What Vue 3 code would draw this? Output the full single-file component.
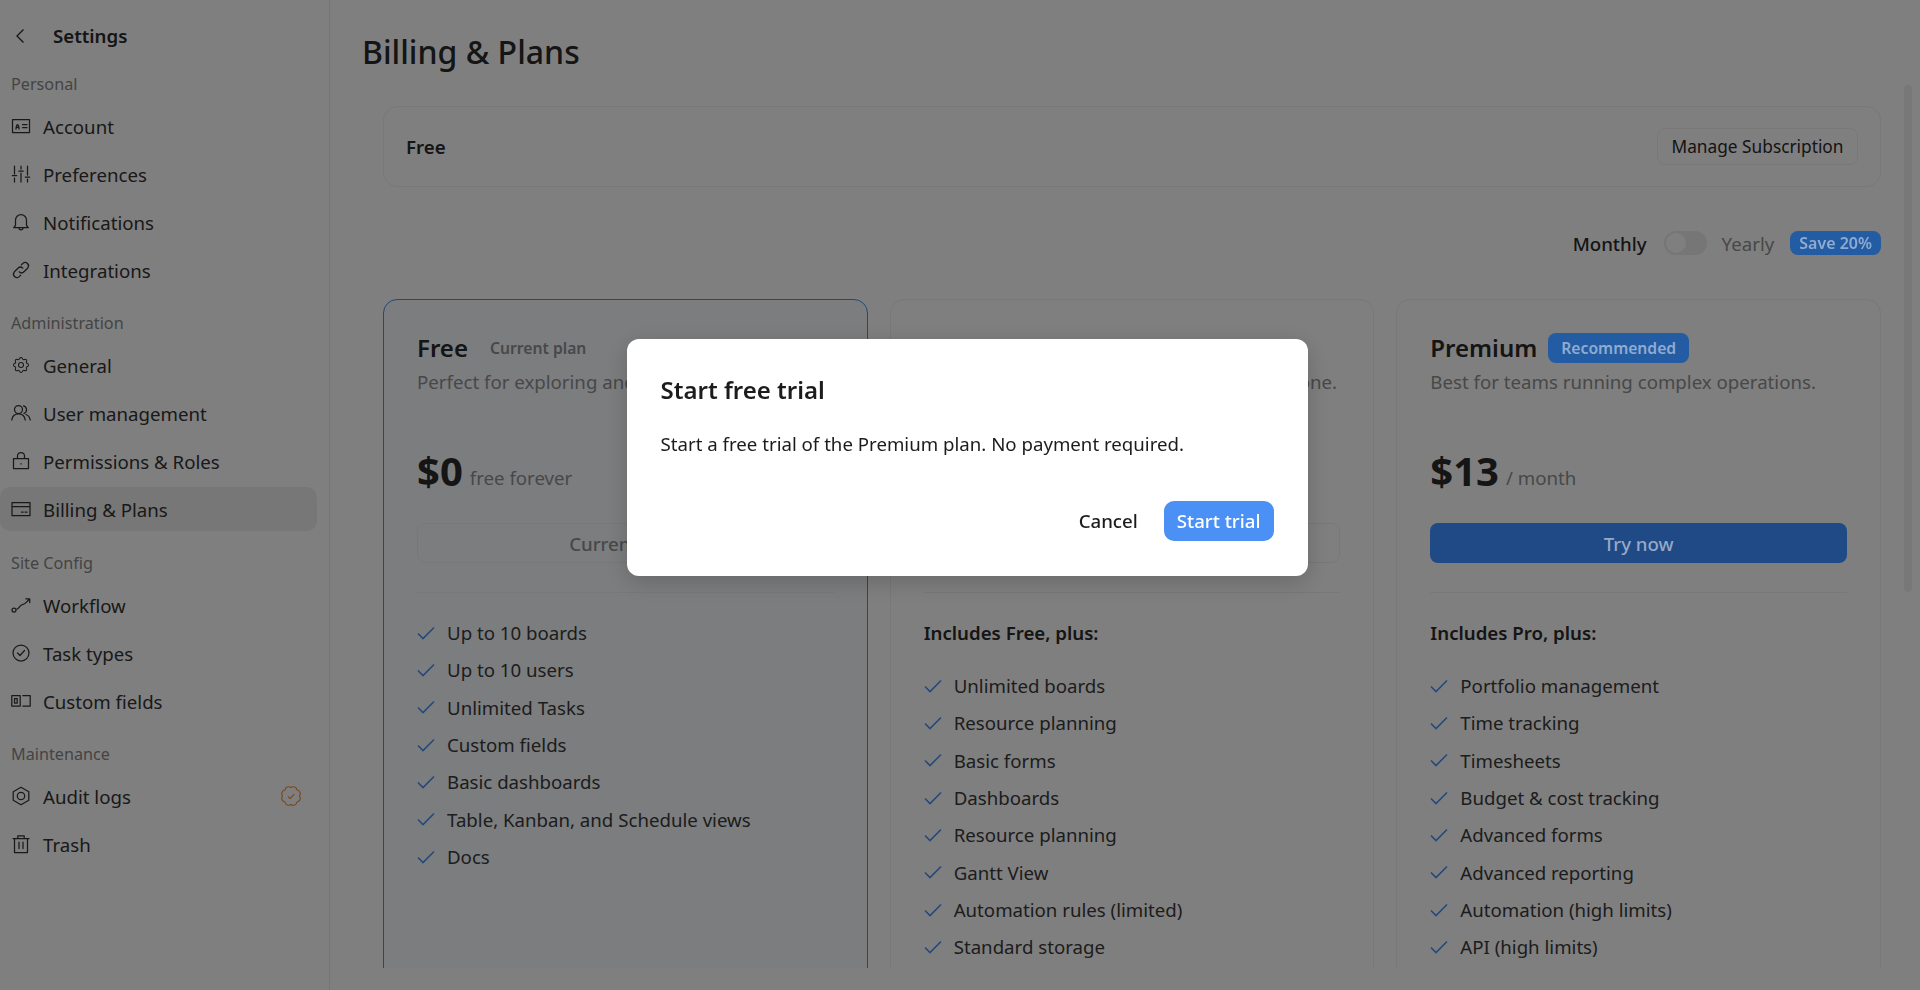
<template>
  <div class="page">
    <aside class="side">
      <div class="side__head">
        <svg class="side__back" viewBox="0 0 20 20" width="20" height="20"><path d="M12.500 3.500 6 10l6.500 6.500" /></svg>
        <span class="side__title">Settings</span>
      </div>
      <section v-for="group in nav" :key="group.label" class="side__group">
        <div class="side__label">{{ group.label }}</div>
        <a
          v-for="item in group.items"
          :key="item.name"
          class="side__item"
          :class="{ 'side__item--active': item.name === 'Billing & Plans' }"
        >
          <svg class="icon" :viewBox="item.box || '0 0 20 20'" width="20" height="20">
            <path :d="item.d" />
          </svg>
          <span>{{ item.name }}</span>
          <svg v-if="item.badge" class="side__badge" viewBox="0 0 20 20" width="20" height="20">
            <path d="M10 1.500A3.800 3.800 0 0 1 16 4A3.800 3.800 0 0 1 18.500 10A3.800 3.800 0 0 1 16 16A3.800 3.800 0 0 1 10 18.500A3.800 3.800 0 0 1 4 16A3.800 3.800 0 0 1 1.500 10A3.800 3.800 0 0 1 4 4A3.800 3.800 0 0 1 10 1.500z" />
            <path d="M6.800 10.400l2.300 2.300 4.200-4.600" />
          </svg>
        </a>
      </section>
    </aside>

    <main class="main">
      <h1 class="main__title">Billing &amp; Plans</h1>
      <div class="scroller">
        <div class="current">
          <strong>Free</strong>
          <button class="btn-outline" type="button">Manage Subscription</button>
        </div>

        <div class="period">
          <span class="period__on">Monthly</span>
          <span class="switch"><i></i></span>
          <span class="period__off">Yearly</span>
          <span class="pill pill--save">Save 20%</span>
        </div>

        <div class="plans">
          <article
            v-for="plan in plans"
            :key="plan.name"
            class="plan"
            :class="{ 'plan--current': plan.current }"
          >
            <div class="plan__head">
              <h2>{{ plan.name }}</h2>
              <span v-if="plan.tag" class="pill" :class="{ 'pill--muted': plan.current }">{{ plan.tag }}</span>
            </div>
            <p class="plan__desc">{{ plan.desc }}</p>
            <div class="plan__price">
              <b>{{ plan.price }}</b>
              <span>{{ plan.unit }}</span>
            </div>
            <button class="plan__cta" :class="{ 'plan__cta--primary': plan.primary }" type="button">
              {{ plan.cta }}
            </button>
            <hr />
            <div v-if="plan.intro" class="plan__intro">{{ plan.intro }}</div>
            <ul>
              <li v-for="feature in plan.features" :key="feature">
                <svg viewBox="0 0 18 14" width="18" height="14"><path d="M1 7.500 6 12.500 17 1.500" /></svg>
                {{ feature }}
              </li>
            </ul>
          </article>
        </div>
      </div>
      <div class="thumb"></div>
    </main>

    <div class="scrim">
      <div class="dialog">
        <h3>Start free trial</h3>
        <p>Start a free trial of the Premium plan. No payment required.</p>
        <div class="dialog__foot">
          <button class="dialog__cancel" type="button">Cancel</button>
          <button class="dialog__ok" type="button">Start trial</button>
        </div>
      </div>
    </div>
  </div>
</template>

<script setup>
const gear =
  'M10.325 4.317c.426-1.756 2.924-1.756 3.35 0a1.724 1.724 0 0 0 2.573 1.066c1.543-.94 3.31.826 2.37 2.37a1.724 1.724 0 0 0 1.065 2.572c1.756.426 1.756 2.924 0 3.35a1.724 1.724 0 0 0-1.066 2.573c.94 1.543-.826 3.31-2.37 2.37a1.724 1.724 0 0 0-2.572 1.065c-.426 1.756-2.924 1.756-3.35 0a1.724 1.724 0 0 0-2.573-1.066c-1.543.94-3.31-.826-2.37-2.37a1.724 1.724 0 0 0-1.065-2.572c-1.756-.426-1.756-2.924 0-3.35a1.724 1.724 0 0 0 1.066-2.573c-.94-1.543.826-3.31 2.37-2.37 1 .608 2.296.07 2.572-1.065zM9 12a3 3 0 1 0 6 0 3 3 0 0 0-6 0'

const nav = [
  {
    label: 'Personal',
    items: [
      { name: 'Account', d: 'M1.500 3.500h17v13h-17zM5 13c0-1.200 0-2.400.9-3.900.4-.7.8-.7 1.200 0C8 10.600 8 11.800 8 13M5.300 11.400h2.400M11.500 8.500h4.500M11.500 11.500h4.500' },
      { name: 'Preferences', d: 'M3.500 2v8M3.500 14v4M1.300 11.500h4.400M10 2v3M10 9v9M7.800 7h4.400M16.500 2v9M16.500 15v3M14.300 13h4.400' },
      { name: 'Notifications', d: 'M4.500 13.500V8.200a5.500 5.500 0 0 1 11 0v5.300l1.800 2.200H2.700zM8 16c0 2.400 4 2.400 4 0' },
      { name: 'Integrations', d: 'M8.200 11.800a3.400 3.400 0 0 0 4.800 0l3.600-3.600a3.400 3.400 0 0 0-4.800-4.800l-1.400 1.400M11.800 8.200a3.400 3.400 0 0 0-4.800 0l-3.600 3.600a3.400 3.400 0 0 0 4.800 4.800l1.400-1.400' },
    ],
  },
  {
    label: 'Administration',
    items: [
      { name: 'General', box: '0 0 24 24', d: gear },
      { name: 'User management', d: 'M7.500 10.500a4 4 0 1 0 0-8 4 4 0 0 0 0 8zM.8 17c.4-3.600 3-6.200 6.700-6.200s6.300 2.600 6.700 6.200M12.500 2.800a4 4 0 0 1 .5 7.600M15 11.500c2.200.8 3.800 2.800 4.200 5.500' },
      { name: 'Permissions & Roles', d: 'M2.500 7.500h15v10h-15zM6.500 7.500V5a3.500 3.500 0 0 1 7 0v2.500M10 12.500v.6' },
      { name: 'Billing & Plans', d: 'M1 3.500h18v13H1zM1 7.500h18M10.500 13h1.700M14 13h2' },
    ],
  },
  {
    label: 'Site Config',
    items: [
      { name: 'Workflow', d: 'M1 15a2 2 0 1 0 4 0 2 2 0 0 0-4 0zM5 14.500c3.500-.2 3.500-5 6.500-5 2.800 0 3.300-1.800 7-5.500M14.800 3.800h3.900v3.900' },
      { name: 'Task types', d: 'M2 10a8 8 0 1 0 16 0 8 8 0 0 0-16 0zM6.500 10l2.500 2.500 4.500-5' },
      { name: 'Custom fields', d: 'M.8 4.500h8.400v10.500H.8zM3.500 7.500h2.700v4.500H3.500zM11.800 4.500h7.400v10.500h-7.400' },
    ],
  },
  {
    label: 'Maintenance',
    items: [
      { name: 'Audit logs', badge: true, d: 'M10 1.300l7.800 4.400v8.600L10 18.700l-7.800-4.400V5.700zM6.300 10a3.700 3.700 0 1 0 7.400 0 3.700 3.700 0 0 0-7.400 0z' },
      { name: 'Trash', d: 'M3.500 4.500h13v14h-13zM6.800 4.500V1.800h6.400v2.700M2 4.500h16M8 8v6.500M12 8v6.500' },
    ],
  },
]

const plans = [
  {
    name: 'Free',
    tag: 'Current plan',
    current: true,
    desc: 'Perfect for exploring and getting started.',
    price: '$0',
    unit: 'free forever',
    cta: 'Current plan',
    features: [
      'Up to 10 boards',
      'Up to 10 users',
      'Unlimited Tasks',
      'Custom fields',
      'Basic dashboards',
      'Table, Kanban, and Schedule views',
      'Docs',
    ],
  },
  {
    name: 'Pro',
    desc: 'Great for teams coordinating their work in one.',
    price: '$9',
    unit: '/ month',
    cta: 'Try now',
    intro: 'Includes Free, plus:',
    features: [
      'Unlimited boards',
      'Resource planning',
      'Basic forms',
      'Dashboards',
      'Resource planning ',
      'Gantt View',
      'Automation rules (limited)',
      'Standard storage',
    ],
  },
  {
    name: 'Premium',
    tag: 'Recommended',
    primary: true,
    desc: 'Best for teams running complex operations.',
    price: '$13',
    unit: '/ month',
    cta: 'Try now',
    intro: 'Includes Pro, plus:',
    features: [
      'Portfolio management',
      'Time tracking',
      'Timesheets',
      'Budget & cost tracking',
      'Advanced forms',
      'Advanced reporting',
      'Automation (high limits)',
      'API (high limits)',
    ],
  },
]
</script>

<style>
html,
body {
  margin: 0;
  background: #fff;
}
</style>

<style scoped>
.page {
  display: flex;
  height: 990px;
  overflow: hidden;
  background: #fff;
  font-family: "Noto Sans", sans-serif;
  font-size: 18.67px;
  color: #333;
}

.side {
  flex: none;
  width: 329px;
  border-right: 1px solid #ebebeb;
  padding-top: 18px;
  box-sizing: content-box;
}

.side__head {
  display: flex;
  align-items: center;
  height: 35px;
  padding-left: 11px;
  gap: 22px;
}

.side__back {
  fill: none;
  stroke: #333;
  stroke-width: 1.4;
}

.side__title {
  font-weight: 600;
  color: #2a2a2a;
}

.side__group {
  margin-top: 19px;
}

.side__group:nth-child(4) {
  margin-top: 20px;
}

.side__label {
  padding-left: 11px;
  margin-bottom: 8px;
  font-size: 16.2px;
  line-height: 24px;
  color: #888;
}

.side__item {
  display: flex;
  align-items: center;
  gap: 12px;
  height: 44px;
  margin: 0 12px 4px 0;
  padding: 0 16px 0 11px;
  border-radius: 10px;
}

.side__item--active {
  background: #eeeeee;
}

.icon {
  flex: none;
  fill: none;
  stroke: #333;
  stroke-width: 1.25;
  stroke-linejoin: round;
  stroke-linecap: round;
}

.side__badge {
  margin-left: auto;
  fill: none;
  stroke: #f0923c;
  stroke-width: 1.2;
  stroke-linejoin: round;
}

.main {
  position: relative;
  flex: 1;
  display: flex;
  flex-direction: column;
  min-width: 0;
  height: 968px;
}

.main__title {
  flex: none;
  margin: 0;
  height: 85px;
  padding-left: 32px;
  font-size: 32px;
  font-weight: 500;
  line-height: 103px;
  box-sizing: border-box;
  color: #2a2a2a;
}

.scroller {
  flex: 1;
  overflow: hidden;
  padding: 21px 39px 0 53px;
}

.thumb {
  position: absolute;
  top: 85px;
  right: 8px;
  width: 8px;
  height: 507px;
  border-radius: 4px;
  background: #f0f0f0;
}

.current {
  display: flex;
  align-items: center;
  justify-content: space-between;
  box-sizing: border-box;
  height: 81px;
  padding: 0 22px;
  border: 1px solid #f0f0f0;
  border-radius: 14px;
  color: #2a2a2a;
}

.current strong {
  font-weight: 600;
}

.btn-outline {
  width: 201px;
  height: 37px;
  padding: 0;
  border: 1px solid #f0f0f0;
  border-radius: 8px;
  background: transparent;
  font: 400 17.3px "Noto Sans", sans-serif;
  color: #2a2a2a;
}

.period {
  display: flex;
  align-items: center;
  justify-content: flex-end;
  height: 24px;
  margin-top: 44px;
}

.period__on {
  font-weight: 500;
  color: #2a2a2a;
}

.switch {
  display: flex;
  align-items: center;
  width: 43px;
  height: 24px;
  margin: 0 15px 0 17px;
  padding: 2px;
  box-sizing: border-box;
  border-radius: 12px;
  background: #ececec;
}

.switch i {
  width: 20px;
  height: 20px;
  border-radius: 50%;
  background: #fff;
}

.period__off {
  margin-right: 16px;
  color: #909090;
}

/* badges and the main button sit above the scrim, they keep their own dimmed colours */
.pill {
  position: relative;
  z-index: 2;
  display: inline-flex;
  align-items: center;
  height: 30px;
  padding: 0 13px;
  border-radius: 8px;
  background: #245ca3;
  font-size: 15.7px;
  font-weight: 600;
  color: #8fabd0;
}

.pill--save {
  height: 24px;
  padding: 0 9px;
  font-size: 16px;
}

.pill--muted {
  z-index: auto;
  padding: 0 11px;
  background: transparent;
  color: #909090;
}

.plans {
  display: grid;
  grid-template-columns: repeat(3, minmax(0, 1fr));
  gap: 22px;
  margin-top: 44px;
}

.plan {
  min-height: 760px;
  padding: 33px;
  border: 1px solid #f0f0f0;
  border-radius: 14px;
}

.plan--current {
  border-color: #4a90f5;
  background: #f8fbfe;
}

.plan__head {
  display: flex;
  align-items: center;
  gap: 11px;
  height: 30px;
}

.plan h2 {
  margin: 0;
  font-size: 24px;
  font-weight: 600;
  line-height: 30px;
  color: #2a2a2a;
}

.plan__desc {
  margin: 5px 0 0;
  line-height: 28px;
  white-space: nowrap;
  color: #909090;
}

.plan__price {
  display: flex;
  align-items: baseline;
  gap: 7px;
  height: 56px;
  margin-top: 47px;
  line-height: 56px;
  color: #909090;
}

.plan__price b {
  font-size: 40px;
  font-weight: 700;
  color: #2a2a2a;
}

.plan__price span {
  transform: translateY(-1px);
}

.plan__cta {
  display: block;
  width: 100%;
  height: 40px;
  margin-top: 24px;
  padding: 0;
  border: 1px solid #f0f0f0;
  border-radius: 8px;
  background: transparent;
  font: 500 18.67px "Noto Sans", sans-serif;
  color: #909090;
}

.plan__cta--primary {
  position: relative;
  z-index: 2;
  border: 0;
  background: #204a85;
  color: #94a9c6;
}

.plan hr {
  margin: 29px 0 0;
  border: 0;
  border-top: 1px solid #f0f0f0;
}

.plan__intro {
  margin-top: 26px;
  font-weight: 600;
  line-height: 27px;
  color: #2a2a2a;
}

.plan ul {
  margin: 21px 0 0;
  padding: 0;
  list-style: none;
}

.plan li {
  display: flex;
  align-items: center;
  gap: 12px;
  height: 37.33px;
  color: #3a3a3a;
}

.plan li svg {
  flex: none;
  fill: none;
  stroke: #4a90f5;
  stroke-width: 1.6;
}

.scrim {
  position: fixed;
  inset: 0;
  z-index: 1;
  display: flex;
  align-items: center;
  justify-content: center;
  box-sizing: border-box;
  padding: 0 0 76px 14px;
  background: rgba(0, 0, 0, 0.5);
}

.dialog {
  width: 681px;
  box-sizing: border-box;
  padding: 32px 34px 35px 34px;
  border-radius: 12px;
  background: #fff;
  box-shadow: 0 6px 24px rgba(0, 0, 0, 0.18);
  color: #1c1c1c;
}

.dialog h3 {
  margin: 0;
  font-size: 24px;
  font-weight: 600;
  line-height: 38px;
}

.dialog p {
  margin: 21px 0 0;
  line-height: 28px;
}

.dialog__foot {
  display: flex;
  justify-content: flex-end;
  gap: 13px;
  margin-top: 43px;
}

.dialog__foot button {
  height: 40px;
  padding: 0 13px;
  border: 0;
  border-radius: 10px;
  font: 500 18.67px "Noto Sans", sans-serif;
}

.dialog__cancel {
  background: transparent;
  color: #1c1c1c;
}

.dialog__ok {
  background: #4a90f5;
  color: #fff;
}
</style>
